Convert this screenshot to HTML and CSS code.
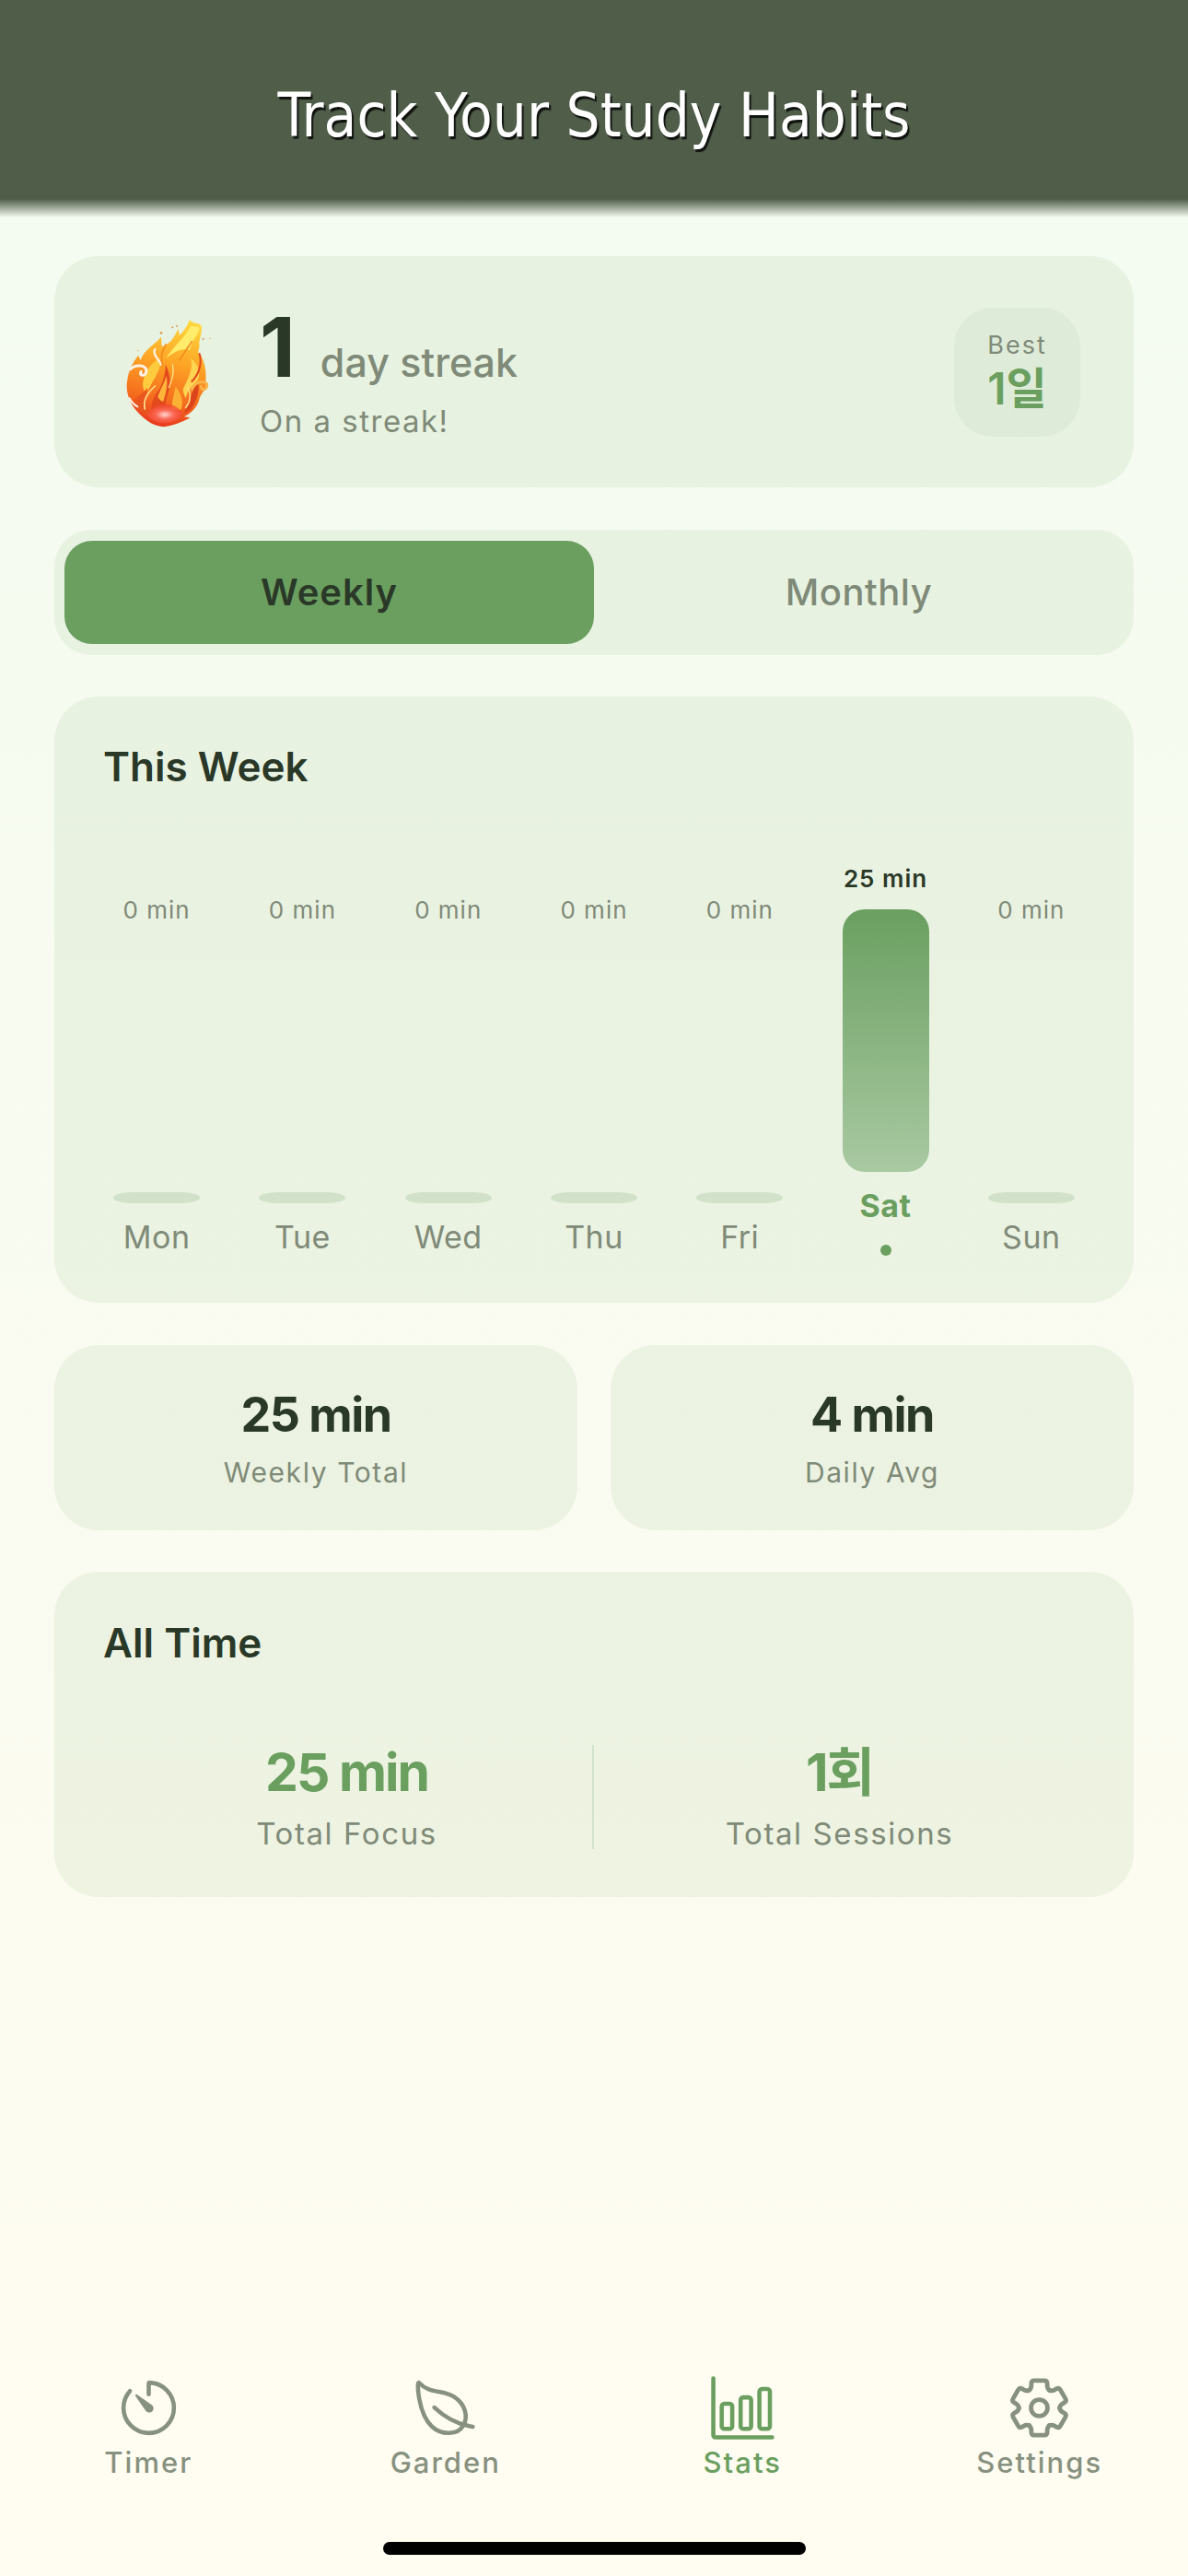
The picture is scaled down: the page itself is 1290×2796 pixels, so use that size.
FILE: index.html
```html
<!DOCTYPE html>
<html lang="en">
<head>
  <meta charset="utf-8">
  <title>Track Your Study Habits</title>
  <link rel="stylesheet" href="styles.css">
</head>
<body>
  <header class="top-bar">
    <h1>Track Your Study Habits</h1>
  </header>

  <main class="content">
    <section class="card streak">
      <svg class="flame" viewBox="0 10 480 480">
        <defs>
          <linearGradient id="flame-body" x1="0.6" y1="0" x2="0.45" y2="1">
            <stop offset="0" stop-color="#ffd83f"/>
            <stop offset="0.4" stop-color="#fda425"/>
            <stop offset="0.75" stop-color="#f56d1e"/>
            <stop offset="1" stop-color="#e8381c"/>
          </linearGradient>
          <radialGradient id="flame-core" cx="0.5" cy="0.55" r="0.6">
            <stop offset="0" stop-color="#ffd6cf"/>
            <stop offset="0.4" stop-color="#fb6a58"/>
            <stop offset="1" stop-color="#ee3e20" stop-opacity="0.6"/>
          </radialGradient>
        </defs>
        <!-- outer silhouette -->
        <path fill="url(#flame-body)" d="M232 428C195 425 165 400 140 370C120 345 108 310 115 275C118 245 135 215 150 195L158 210C170 175 205 160 225 135C228 155 222 165 232 165C255 155 270 135 280 108L285 130C300 115 312 95 318 78C325 95 350 85 356 100C360 125 345 150 350 165L345 185C360 195 375 240 370 280C378 300 360 310 350 335C345 365 320 385 300 395L320 398C295 412 260 425 232 428Z"/>
        <!-- yellow tongues -->
        <path fill="#ffec6a" d="M240 205C262 170 300 140 322 100C338 100 348 100 350 108C345 130 322 150 318 178C300 170 270 180 240 205Z"/>
        <path fill="#ffcb3e" d="M165 290C168 250 190 220 222 205C226 240 205 265 190 295C180 315 168 325 165 290Z"/>
        <path fill="#ffd450" d="M296 305C312 272 330 240 322 205C345 225 355 250 345 275C335 290 315 295 305 335C300 325 296 315 296 305Z"/>
        <!-- red tongues -->
        <path fill="#e9551f" d="M135 345C150 325 165 320 180 300C175 335 170 360 190 395C165 385 145 365 135 345Z"/>
        <path fill="#e34a1e" d="M196 385C186 350 205 325 222 300C232 280 238 255 240 225C256 262 258 290 246 322C238 345 236 365 240 385Z"/>
        <path fill="#dc441c" d="M298 385C318 350 322 310 345 285C352 310 340 350 318 375Z"/>
        <path fill="#ffb53a" d="M214 330C222 305 236 285 242 262C248 290 240 320 232 345C226 345 220 340 214 330Z"/>
        <path fill="#fbb035" d="M262 372C258 345 268 320 272 295C290 320 300 345 290 372Z"/>
        <path fill="url(#flame-core)" d="M178 392C198 345 268 340 296 385C280 412 252 416 232 416C212 416 192 408 178 392Z"/>
        <!-- swirls and highlights -->
        <g fill="none" stroke-linecap="round">
          <path stroke="#fff4e6" stroke-width="9" d="M125 240C142 222 182 226 176 250C170 266 150 260 160 248"/>
          <path stroke="#fff4e6" stroke-width="7" d="M205 175C195 190 215 205 225 225"/>
          <path stroke="#fff4e6" stroke-width="6" d="M122 335C130 350 140 358 148 362"/>
          <path stroke="#f9b44a" stroke-width="9" d="M325 305C342 272 384 278 372 300C366 310 352 306 356 296"/>
          <path stroke="#e0491c" stroke-width="6" d="M350 190C358 220 350 255 325 280"/>
          <path stroke="#ffe08a" stroke-width="5" d="M172 370C165 340 180 318 205 295"/>
          <path stroke="#ffe08a" stroke-width="5" d="M305 365C322 345 322 320 312 300"/>
          <path stroke="#f58a1e" stroke-width="5" d="M285 210C300 190 310 170 325 150"/>
          <path stroke="#ffe08a" stroke-width="4" d="M250 300C262 270 268 250 262 225"/>
          <path stroke="#f58a1e" stroke-width="5" d="M240 160C225 185 222 205 230 230"/>
        </g>
        <!-- embers -->
        <g fill="#d99a52">
          <circle cx="262" cy="104" r="3"/>
          <circle cx="276" cy="100" r="3"/>
          <circle cx="225" cy="122" r="4"/>
          <circle cx="362" cy="142" r="3"/>
          <circle cx="384" cy="140" r="2"/>
          <circle cx="150" cy="180" r="2"/>
        </g>
      </svg>
      <div class="streak-text">
        <div class="streak-count"><span class="streak-num">1</span><span class="streak-unit">day streak</span></div>
        <div class="streak-sub">On a streak!</div>
      </div>
      <div class="best">
        <div class="best-label">Best</div>
        <div class="best-value">1일</div>
      </div>
    </section>

    <div class="tabs">
      <div class="tab active">Weekly</div>
      <div class="tab">Monthly</div>
    </div>

    <section class="card week">
      <h2>This Week</h2>
      <div class="chart">
        <div class="day">
          <div class="day-value">0 min</div>
          <div class="bar-area"><div class="bar empty"></div></div>
          <div class="day-name">Mon</div>
        </div>
        <div class="day">
          <div class="day-value">0 min</div>
          <div class="bar-area"><div class="bar empty"></div></div>
          <div class="day-name">Tue</div>
        </div>
        <div class="day">
          <div class="day-value">0 min</div>
          <div class="bar-area"><div class="bar empty"></div></div>
          <div class="day-name">Wed</div>
        </div>
        <div class="day">
          <div class="day-value">0 min</div>
          <div class="bar-area"><div class="bar empty"></div></div>
          <div class="day-name">Thu</div>
        </div>
        <div class="day">
          <div class="day-value">0 min</div>
          <div class="bar-area"><div class="bar empty"></div></div>
          <div class="day-name">Fri</div>
        </div>
        <div class="day today">
          <div class="day-value">25 min</div>
          <div class="bar-area"><div class="bar filled"></div></div>
          <div class="day-name">Sat</div>
          <div class="day-dot"></div>
        </div>
        <div class="day">
          <div class="day-value">0 min</div>
          <div class="bar-area"><div class="bar empty"></div></div>
          <div class="day-name">Sun</div>
        </div>
      </div>
    </section>

    <div class="summary">
      <section class="card summary-item">
        <div class="summary-value">25 min</div>
        <div class="summary-label">Weekly Total</div>
      </section>
      <section class="card summary-item">
        <div class="summary-value">4 min</div>
        <div class="summary-label">Daily Avg</div>
      </section>
    </div>

    <section class="card all-time">
      <h2>All Time</h2>
      <div class="all-time-row">
        <div class="all-time-item">
          <div class="all-time-value">25 min</div>
          <div class="all-time-label">Total Focus</div>
        </div>
        <div class="all-time-divider"></div>
        <div class="all-time-item">
          <div class="all-time-value">1회</div>
          <div class="all-time-label">Total Sessions</div>
        </div>
      </div>
    </section>
  </main>

  <nav class="tab-bar">
    <div class="nav-item">
      <svg class="nav-icon" viewBox="0 0 512 512">
        <path class="line" d="M112.91 128A191.85 191.85 0 0064 254c-1.18 106.35 85.65 193.8 192 194 106.2.2 192-85.83 192-192 0-104.54-83.55-189.61-187.5-192a4.36 4.36 0 00-4.5 4.37V152"/>
        <path class="solid" d="M233.38 278.63l-79-113a8.13 8.13 0 0111.32-11.32l113 79a32.5 32.5 0 01-37.25 53.26 33.21 33.21 0 01-8.07-7.94z"/>
      </svg>
      <span>Timer</span>
    </div>
    <div class="nav-item">
      <svg class="nav-icon" viewBox="0 0 512 512">
        <path class="line" d="M321.89 171.42C233 114 141 155.22 56 65.22c-19.8-21-8.3 235.5 98.1 332.7 77.79 71 197.9 63.08 238.4-5.92s18.28-163.17-70.61-220.58z"/>
        <path class="line" d="M173 253c86 81 175 129 292 147"/>
      </svg>
      <span>Garden</span>
    </div>
    <div class="nav-item active">
      <svg class="nav-icon" viewBox="0 0 512 512">
        <path class="line" d="M32 32v432a16 16 0 0016 16h432"/>
        <rect class="line" x="96" y="224" width="80" height="192" rx="20" ry="20"/>
        <rect class="line" x="240" y="176" width="80" height="240" rx="20" ry="20"/>
        <rect class="line" x="383" y="112" width="80" height="304" rx="20" ry="20"/>
      </svg>
      <span>Stats</span>
    </div>
    <div class="nav-item">
      <svg class="nav-icon gear" viewBox="-11.4 -11.4 22.8 22.8">
        <defs>
          <path id="gear-tooth" d="M-3.45-5.97Q-2.7-6.6-2.7-7.6V-8.2Q-2.7-9.25-1.7-9.25H1.7Q2.7-9.25 2.7-8.2V-7.6Q2.7-6.6 3.45-5.97"/>
        </defs>
        <use href="#gear-tooth"/>
        <use href="#gear-tooth" transform="rotate(60)"/>
        <use href="#gear-tooth" transform="rotate(120)"/>
        <use href="#gear-tooth" transform="rotate(180)"/>
        <use href="#gear-tooth" transform="rotate(240)"/>
        <use href="#gear-tooth" transform="rotate(300)"/>
        <circle r="2.8"/>
      </svg>
      <span>Settings</span>
    </div>
  </nav>

  <div class="home-bar"></div>
</body>
</html>
```

FILE: styles.css
```css
* {
  box-sizing: border-box;
}

body {
  position: relative;
  display: flex;
  flex-direction: column;
  width: 1290px;
  height: 2796px;
  margin: 0;
  overflow: hidden;
  background: linear-gradient(180deg, #f3fbf0 0%, #fffcf1 100%);
  color: #2a3828;
  font-family: Inter, "Noto Sans CJK KR", sans-serif;
}

h1, h2 {
  margin: 0;
}

/* header */
.top-bar {
  position: relative;
  display: flex;
  justify-content: center;
  align-items: center;
  height: 216px;
  padding-top: 36px;
  background-color: #4f5d49;
}

.top-bar::after {
  content: "";
  position: absolute;
  top: 100%;
  left: 0;
  right: 0;
  height: 20px;
  background: linear-gradient(180deg, #4f5d49, rgba(79, 93, 73, 0));
}

.top-bar h1 {
  color: #fff;
  font-family: "DejaVu Sans", sans-serif;
  font-size: 65px;
  font-stretch: condensed;
  font-weight: 400;
  line-height: 1.2;
  text-shadow: 2px 3px 1px rgba(0, 0, 0, 0.8);
}

/* page body */
.content {
  display: flex;
  flex: 1;
  flex-direction: column;
  gap: 45.5px;
  padding: 62px 59px 0;
}

.card {
  border-radius: 48px;
  background-color: rgba(95, 150, 75, 0.09);
}

.card h2 {
  font-size: 44px;
  font-weight: 600;
  line-height: 50px;
}

/* streak */
.streak {
  display: flex;
  align-items: center;
  height: 251px;
  padding: 0 58px 0 41px;
}

.flame {
  flex: none;
  width: 160px;
  height: 160px;
  margin-right: 22px;
  filter: blur(0.5px);
}

.streak-text {
  flex: 1;
}

.streak-count {
  display: flex;
  align-items: baseline;
  gap: 27px;
  margin-top: -4px;
}

.streak-num {
  font-size: 90px;
  font-weight: 700;
  line-height: 100px;
}

.streak-unit {
  color: #7f8a78;
  font-size: 43px;
  font-weight: 500;
}

.streak-sub {
  color: #7f8a78;
  font-size: 33px;
  letter-spacing: 1.5px;
  line-height: 40px;
  margin-top: 10px;
}

.best {
  display: flex;
  flex-direction: column;
  align-items: center;
  justify-content: center;
  width: 137px;
  height: 140px;
  border-radius: 42px;
  background-color: rgba(85, 141, 82, 0.06);
}

.best-label {
  color: #7f8a78;
  font-size: 27px;
  letter-spacing: 2px;
  line-height: 32px;
}

.best-value {
  margin-top: 4px;
  color: #6a9f60;
  font-size: 48px;
  font-weight: 600;
  line-height: 54px;
}

/* weekly / monthly switch */
.tabs {
  display: flex;
  height: 136px;
  padding: 12px 11px;
  border-radius: 40px;
  background-color: rgba(95, 150, 75, 0.09);
}

.tab {
  flex: 1;
  display: flex;
  justify-content: center;
  align-items: center;
  border-radius: 30px;
  color: #7f8a78;
  font-size: 40px;
  font-weight: 500;
  letter-spacing: 0.5px;
}

.tab.active {
  background-color: #6a9f60;
  color: #2a3828;
  font-weight: 600;
  letter-spacing: 1px;
}

/* week chart */
.week {
  height: 658px;
  padding: 51px 53px 0;
}

.chart {
  display: flex;
  align-items: flex-end;
  height: 506px;
  margin: 0 -21px;
}

.day {
  display: flex;
  flex: 1;
  flex-direction: column;
  align-items: center;
}

.day-value {
  color: #7f8a78;
  font-size: 26px;
  line-height: 30px;
  letter-spacing: 1px;
  margin-bottom: 18px;
}

.bar-area {
  display: flex;
  align-items: flex-end;
  height: 285px;
}

.bar {
  width: 94px;
}

.bar.empty {
  height: 12px;
  border-radius: 20px / 6px;
  background-color: #d2e2ca;
}

.bar.filled {
  height: 285px;
  border-radius: 24px;
  background: linear-gradient(180deg, #6a9f60, #a9c9a2);
}

.day-name {
  margin-top: 17px;
  color: #7f8a78;
  font-size: 34px;
  letter-spacing: 0.5px;
  line-height: 40px;
}

.day-dot {
  width: 12px;
  height: 12px;
  margin-top: 22px;
  border-radius: 50%;
  background-color: #6a9f60;
}

.today .day-value {
  color: #2a3828;
  font-weight: 600;
}

.today .day-name {
  color: #6a9f60;
  font-weight: 700;
}

/* summary pair */
.summary {
  display: flex;
  gap: 36px;
}

.summary-item {
  display: flex;
  flex: 1;
  flex-direction: column;
  align-items: center;
  height: 201px;
  padding-top: 46px;
}

.summary-value {
  font-size: 52px;
  font-weight: 700;
  letter-spacing: -1.5px;
  line-height: 60px;
}

.summary-label {
  margin-top: 14px;
  color: #7f8a78;
  font-size: 30px;
  letter-spacing: 1.6px;
  line-height: 36px;
}

/* all time */
.all-time {
  height: 353px;
  padding: 52px 53px 0;
}

.all-time-row {
  display: flex;
  align-items: center;
  margin-top: 83px;
  margin-left: -2px;
}

.all-time-item {
  display: flex;
  flex: 1;
  flex-direction: column;
  align-items: center;
}

.all-time-divider {
  width: 2px;
  height: 113px;
  background-color: #d2e2ca;
}

.all-time-value {
  color: #6a9f60;
  font-size: 57px;
  font-weight: 700;
  letter-spacing: -2px;
  line-height: 66px;
}

.all-time-label {
  margin-top: 13px;
  color: #7f8a78;
  font-size: 33px;
  letter-spacing: 1.6px;
  line-height: 40px;
}

/* bottom navigation */
.tab-bar {
  display: flex;
  height: 236px;
  padding-top: 17px;
  background-color: #fffcf1;
}

.nav-item {
  display: flex;
  flex: 1;
  flex-direction: column;
  align-items: center;
  color: #87917f;
  font-size: 31px;
  font-weight: 500;
  letter-spacing: 2px;
  line-height: 36px;
}

.nav-item span {
  margin-top: 5px;
}

.nav-item.active {
  color: #6a9f60;
}

.nav-icon {
  width: 73px;
  height: 73px;
  fill: none;
  stroke: currentColor;
  stroke-linecap: round;
  stroke-linejoin: round;
  stroke-width: 32px;
}

.nav-icon .solid {
  fill: currentColor;
  stroke: none;
}

.nav-icon.gear {
  stroke-width: 1.5px;
}

.home-bar {
  position: absolute;
  bottom: 23px;
  left: 416px;
  width: 459px;
  height: 14px;
  border-radius: 7px;
  background-color: #000;
}
```
